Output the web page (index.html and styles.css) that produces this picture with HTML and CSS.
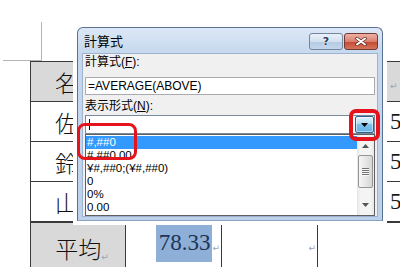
FILE: index.html
```html
<!DOCTYPE html>
<html lang="ja">

<head>
    <meta charset="UTF-8">
    <title>計算式</title>
    <link rel="stylesheet" href="styles.css">
</head>

<body>
    <div class="page">
        <div class="corner"></div>

        <table class="grid upper">
            <tr class="head">
                <td class="name">名前</td>
                <td class="mid"></td>
                <td class="last"><span class="mark">↵</span></td>
            </tr>
            <tr>
                <td class="name">佐藤</td>
                <td class="mid"></td>
                <td class="last num">55</td>
            </tr>
            <tr>
                <td class="name">鈴木</td>
                <td class="mid"></td>
                <td class="last num">58</td>
            </tr>
            <tr>
                <td class="name">山田</td>
                <td class="mid"></td>
                <td class="last num">52</td>
            </tr>
        </table>

        <table class="grid lower">
            <tr>
                <td class="name head">平均<span class="mark end">↵</span></td>
                <td class="val"><span class="sel">78.33</span><span class="mark">↵</span></td>
                <td class="val"><span class="mark">↵</span></td>
                <td class="val wide"></td>
            </tr>
        </table>
    </div>

    <!-- ダイアログ (文書の上に重なる) -->
    <div class="dialog">
        <div class="titlebar">
            <span class="title">計算式</span>
            <div class="tbtns">
                <span class="tbtn help">?</span>
                <span class="tbtn close">
                    <svg width="12" height="9" viewBox="0 0 12 9">
                        <path d="M2 1.5 L10 7.5 M10 1.5 L2 7.5" stroke="#5a2a22" stroke-width="3.4" stroke-linecap="round"/>
                        <path d="M2 1.5 L10 7.5 M10 1.5 L2 7.5" stroke="#fff" stroke-width="2" stroke-linecap="round"/>
                    </svg>
                </span>
            </div>
        </div>
        <div class="client">
            <div class="label">計算式(<u>F</u>):</div>
            <div class="field">=AVERAGE(ABOVE)</div>
            <div class="label second">表示形式(<u>N</u>):</div>
            <div class="combo">
                <div class="combo-text"><span class="caret"></span></div>
                <div class="combo-btn">
                    <svg width="7" height="4" viewBox="0 0 7 4"><path d="M0 0 H7 L3.5 4 Z" fill="#000"/></svg>
                </div>
            </div>
            <div class="list">
                <div class="items">
                    <div class="item selected">#,##0</div>
                    <div class="item">#,##0.00</div>
                    <div class="item">¥#,##0;(¥#,##0)</div>
                    <div class="item">0</div>
                    <div class="item">0%</div>
                    <div class="item">0.00</div>
                </div>
                <div class="scroll">
                    <div class="arrow up">
                        <svg width="7" height="4" viewBox="0 0 7 4"><path d="M0 4 H7 L3.5 0 Z" fill="#555"/></svg>
                    </div>
                    <div class="thumb"><span class="grip"></span></div>
                    <div class="track"></div>
                    <div class="arrow down">
                        <svg width="7" height="4" viewBox="0 0 7 4"><path d="M0 0 H7 L3.5 4 Z" fill="#555"/></svg>
                    </div>
                </div>
            </div>
        </div>
    </div>

    <!-- 赤い囲み -->
    <span class="ring ring-btn"></span>
    <span class="ring ring-items"></span>
</body>

</html>
```

FILE: styles.css
```css
body {
    margin: 0;
    width: 400px;
    height: 267px;
    overflow: hidden;
    background: #fff;
    font-family: "Liberation Sans", "Noto Sans CJK JP", sans-serif;
}

.page {
    padding-top: 22px;
    width: 480px;
}

/* 余白の角マーク */
.corner {
    box-sizing: border-box;
    margin-left: 3px;
    width: 39px;
    height: 39px;
    border-right: 1px solid #b4b4b4;
    border-bottom: 1px solid #b4b4b4;
}

.grid {
    margin-left: 30px;
    border-collapse: separate;
    border-spacing: 0;
    table-layout: fixed;
    border-left: 1px solid #3a3a3a;
}

.grid td {
    padding: 0;
    height: 39px;
    border-right: 1px solid #3a3a3a;
    border-bottom: 1px solid #3a3a3a;
    white-space: nowrap;
    overflow: visible;
}

.upper {
    width: 421px;
    border-top: 1px solid #3a3a3a;
}

.lower {
    width: 389px;
    border-top: 1px solid #3a3a3a;
}

.head td,
td.head {
    background: #d9d9d9;
}

.name {
    width: 94px;
    text-align: center;
    font-family: "Noto Sans CJK JP", sans-serif;
    font-weight: 300;
    font-size: 23px;
    color: #111;
}

.mid {
    width: 260px;
}

.grid td.last {
    width: 60px;
    padding-left: 3px;
    text-align: left;
}

.num {
    font-family: "Liberation Serif", serif;
    font-size: 23px;
    color: #1a1a1a;
}

.grid td.val {
    width: 94px;
    text-align: right;
    padding-right: 1px;
    font-family: "Liberation Serif", serif;
    font-size: 23px;
}

.grid td.val.wide {
    width: 99px;
}

.sel {
    display: inline-block;
    height: 39px;
    line-height: 40px;
    padding: 0 2px 0 3px;
    background: #8eafd7;
    color: #1c3456;
    vertical-align: top;
}

.mark {
    font-family: "DejaVu Sans", sans-serif;
    font-size: 9px;
    font-weight: normal;
    color: #9aa4b2;
    vertical-align: -2px;
}

.val .mark {
    vertical-align: top;
    line-height: 50px;
}

.mark.end {
    margin-right: -8px;
}

/* ダイアログ */
.dialog {
    position: absolute;
    left: 77px;
    top: 27px;
    width: 306px;
    height: 194px;
    box-sizing: border-box;
    border: 1px solid #5b7191;
    border-bottom-color: #8aa3c4;
    border-radius: 6px 6px 0 0;
    background: linear-gradient(#dbe7f5, #c6d8ee 25px, #bcd1ea);
    box-shadow: 0 0 0 4px #fff;
    display: flex;
    flex-direction: column;
}

.titlebar {
    height: 25px;
    display: flex;
    align-items: center;
    padding-left: 6px;
}

.title {
    font-family: "Noto Sans CJK JP", sans-serif;
    font-size: 13px;
    color: #000;
}

.tbtns {
    margin-left: auto;
    margin-right: 4px;
    align-self: flex-start;
    margin-top: 5px;
    display: flex;
    gap: 1px;
}

.tbtn {
    box-sizing: border-box;
    width: 34px;
    height: 17px;
    border-radius: 3px;
    display: flex;
    align-items: center;
    justify-content: center;
}

.help {
    border: 1px solid #71859f;
    background: linear-gradient(#eaf1f9, #d2e0f0 50%, #b4c9e2 51%, #c3d6ec);
    font-family: "DejaVu Sans", sans-serif;
    font-weight: bold;
    font-size: 11px;
    color: #263a56;
    text-shadow: 0 0 1px #fff, 0 0 2px #fff;
}

.close {
    border: 1px solid #703a32;
    background: linear-gradient(#eeb1a5, #d9806f 50%, #c2492f 51%, #d7735b);
}

.client {
    flex: 1;
    margin: 0 4px 3px;
    border: 1px solid #9fb3ce;
    background: #f0f0f0;
    padding: 0 2px;
    font-size: 12px;
}

.label {
    height: 16px;
    line-height: 16px;
    color: #000;
}

.label.second {
    margin-top: 3px;
}

.label u {
    text-underline-offset: 1px;
}

.field {
    box-sizing: border-box;
    margin-top: 7px;
    height: 18px;
    line-height: 16px;
    padding-left: 2px;
    border: 1px solid #a9abb0;
    background: #fff;
    font-size: 12px;
}

.combo {
    box-sizing: border-box;
    margin-top: 1px;
    height: 19px;
    display: flex;
    border: 1px solid #7a8a9e;
    background: #fff;
}

.combo-text {
    flex: 1;
    display: flex;
    align-items: center;
}

.caret {
    width: 1px;
    height: 11px;
    margin-left: 3px;
    background: #000;
}

.combo-btn {
    width: 19px;
    box-sizing: border-box;
    border: 1px solid #2c628b;
    border-radius: 2px;
    background: linear-gradient(#e1f2fc, #b1dcf6 45%, #7dc2ee 50%, #64b2e4);
    box-shadow: inset 0 0 0 1px rgba(255, 255, 255, 0.5);
    display: flex;
    align-items: center;
    justify-content: center;
}

.list {
    box-sizing: border-box;
    height: 82px;
    display: flex;
    border: 1px solid #5f5f5f;
    background: #fff;
}

.items {
    flex: 1;
    padding-top: 1px;
}

.item {
    height: 13px;
    line-height: 13px;
    padding-left: 1px;
    font-size: 11.5px;
    color: #000;
    white-space: nowrap;
}

.item.selected {
    background: #3399ff;
    color: #fff;
}

.scroll {
    width: 17px;
    display: flex;
    flex-direction: column;
    background: linear-gradient(to right, #e6e6e6, #f4f4f4 20%, #f4f4f4 80%, #e9e9e9);
}

.arrow {
    display: flex;
    justify-content: center;
    align-items: center;
}

.arrow.up {
    height: 19px;
    padding-top: 3px;
    box-sizing: border-box;
}

.arrow.down {
    height: 19px;
    padding-bottom: 2px;
    box-sizing: border-box;
}

.thumb {
    box-sizing: border-box;
    margin: 1px 1px 0;
    height: 33px;
    border: 1px solid #959595;
    border-radius: 2px;
    background: linear-gradient(to right, #f6f6f6, #e6e6e6 50%, #d6d6d6);
    display: flex;
    align-items: center;
    justify-content: center;
}

.grip {
    width: 7px;
    height: 8px;
    background: repeating-linear-gradient(#727272 0 1px, #f8f8f8 1px 2px);
}

.track {
    flex: 1;
}

/* 赤い囲み */
.ring {
    position: absolute;
    box-sizing: border-box;
    border: 4px solid #e5141c;
}

.ring-btn {
    left: 349px;
    top: 109px;
    width: 31px;
    height: 32px;
    border-radius: 7px;
}

.ring-items {
    left: 77px;
    top: 123px;
    width: 60px;
    height: 37px;
    border-width: 3px;
    border-radius: 8px;
}
```
